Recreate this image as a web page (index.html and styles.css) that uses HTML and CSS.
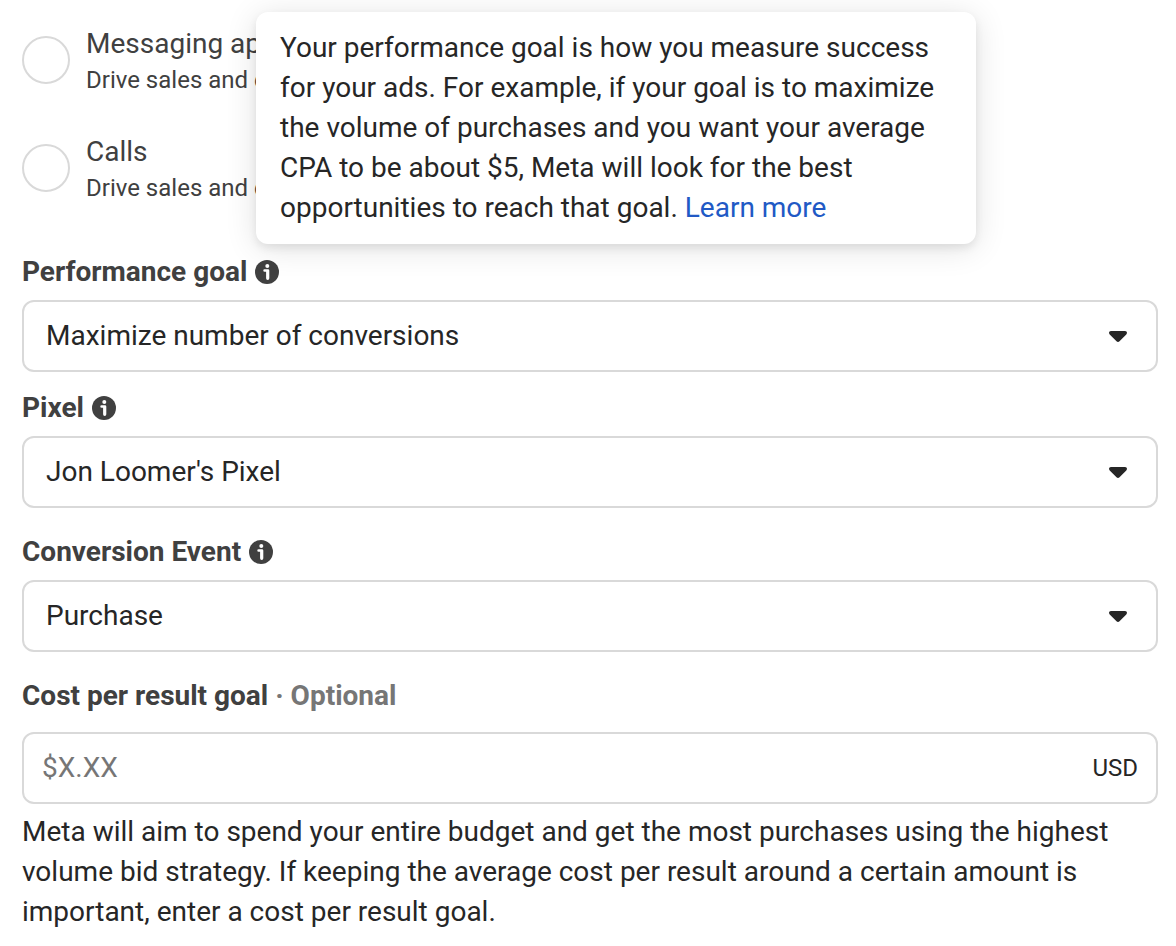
FILE: index.html
```html
<!DOCTYPE html>
<html lang="en">
<head>
  <meta charset="UTF-8" />
  <meta name="viewport" content="width=device-width, initial-scale=1.0"/>
  <title>Ad set</title>
  <link rel="stylesheet" href="styles.css">
</head>
<body>
  <svg class="defs" aria-hidden="true">
    <symbol id="info" viewBox="0 0 24 24">
      <circle cx="12" cy="12" r="12" fill="#404040"/>
      <circle cx="12.300" cy="6" r="2" fill="#fff"/>
      <path d="M9.600 9.200h3.400a1.300 1.300 0 0 1 1.300 1.300v7.800a1.600 1.600 0 0 1-3.200 0v-6.500H9.600a1.300 1.300 0 0 1 0-2.600z" fill="#fff"/>
    </symbol>
    <symbol id="caret" viewBox="0 0 18 11">
      <path d="M2 0h14c2 0 2.600 2.200 1.300 3.400l-6.800 6.900c-.9.900-2.100.9-3 0L.7 3.400C-.6 2.200 0 0 2 0z" fill="#262626"/>
    </symbol>
  </svg>

  <form class="form">
    <div class="locations">
      <label class="option">
        <input type="radio" name="location" value="messaging">
        <span class="option-text">
          <span class="option-title">Messaging apps</span>
          <span class="option-desc">Drive sales and conversions</span>
        </span>
      </label>
      <label class="option">
        <input type="radio" name="location" value="calls">
        <span class="option-text">
          <span class="option-title">Calls</span>
          <span class="option-desc">Drive sales and conversions</span>
        </span>
      </label>
      <div class="tooltip" role="tooltip">
        Your performance goal is how you measure success for your ads. For example, if your goal is to maximize the volume of purchases and you want your average CPA to be about $5, Meta will look for the best opportunities to reach that goal. <a href="#">Learn more</a>
      </div>
    </div>

    <div class="field">
      <div class="field-label">
        <label for="goal">Performance goal</label>
        <svg class="info"><use href="#info"/></svg>
      </div>
      <div class="select">
        <select id="goal"><option>Maximize number of conversions</option></select>
        <svg class="caret"><use href="#caret"/></svg>
      </div>
    </div>

    <div class="field spaced">
      <div class="field-label">
        <label for="pixel">Pixel</label>
        <svg class="info"><use href="#info"/></svg>
      </div>
      <div class="select">
        <select id="pixel"><option>Jon Loomer's Pixel</option></select>
        <svg class="caret"><use href="#caret"/></svg>
      </div>
    </div>

    <div class="field spaced">
      <div class="field-label">
        <label for="event">Conversion Event</label>
        <svg class="info"><use href="#info"/></svg>
      </div>
      <div class="select">
        <select id="event"><option>Purchase</option></select>
        <svg class="caret"><use href="#caret"/></svg>
      </div>
    </div>

    <div class="field cost">
      <div class="field-label">
        <label for="cost">Cost per result goal <span class="optional">· Optional</span></label>
      </div>
      <div class="money">
        <input type="text" id="cost" placeholder="$X.XX">
        <span class="currency">USD</span>
      </div>
      <p class="help">Meta will aim to spend your entire budget and get the most purchases using the highest volume bid strategy. If keeping the average cost per result around a certain amount is important, enter a cost per result goal.</p>
    </div>
  </form>
</body>
</html>
```

FILE: styles.css
```css
* {
  box-sizing: border-box;
}

body {
  margin: 0;
  background: #fff;
  font-family: Roboto, Arial, sans-serif;
  font-size: 28px;
  line-height: 40px;
  color: #262626;
}

.defs {
  position: absolute;
  width: 0;
  height: 0;
}

.form {
  padding: 24px 18px 0 22px;
}

.locations {
  position: relative;
  display: flex;
  flex-direction: column;
  gap: 36px;
  margin-bottom: 48px;
}

.option {
  display: flex;
  align-items: center;
  gap: 16px;
}

.option input {
  appearance: none;
  width: 48px;
  height: 48px;
  margin: 0;
  border: 2px solid #d9d9d9;
  border-radius: 50%;
  background: #fff;
}

.option input:checked {
  border: 14px solid #1877f2;
}

.option-text {
  display: flex;
  flex-direction: column;
}

.option-title {
  color: #404040;
}

.option-desc {
  font-size: 24px;
  line-height: 32px;
  color: #404040;
}

.tooltip {
  position: absolute;
  top: -12px;
  left: 234px;
  width: 720px;
  padding: 16px 24px;
  background: #fff;
  border-radius: 12px;
  box-shadow: 0 4px 8px rgba(0, 0, 0, 0.08), 0 4px 32px rgba(0, 0, 0, 0.12);
}

.tooltip a {
  color: #2159c5;
  text-decoration: none;
}

.field {
  margin-bottom: 16px;
}

.field.spaced {
  margin-bottom: 24px;
}

.field-label {
  display: flex;
  align-items: center;
  gap: 8px;
  margin-bottom: 8px;
  font-weight: bold;
  color: #404040;
}

.optional {
  color: #767676;
}

.info {
  width: 24px;
  height: 24px;
}

.select {
  display: grid;
  align-items: center;
}

.select select,
.money {
  width: 100%;
  height: 72px;
  border: 2px solid #d9d9d9;
  border-radius: 12px;
  background: #fff;
}

.select select {
  grid-area: 1 / 1;
  appearance: none;
  padding: 0 60px 0 22px;
  font: inherit;
  color: inherit;
}

.caret {
  grid-area: 1 / 1;
  justify-self: end;
  width: 18px;
  height: 11px;
  margin-right: 31px;
  pointer-events: none;
}

.cost {
  margin-bottom: 0;
}

.cost .field-label {
  margin-bottom: 16px;
}

.money {
  display: flex;
  align-items: center;
  padding: 0 18px;
}

.money input {
  flex: 1;
  min-width: 0;
  padding: 0;
  border: none;
  outline: none;
  font: inherit;
  color: inherit;
}

.money input::placeholder {
  color: #767676;
}

.currency {
  font-size: 24px;
}

.help {
  margin: 8px 0 0;
}
```
